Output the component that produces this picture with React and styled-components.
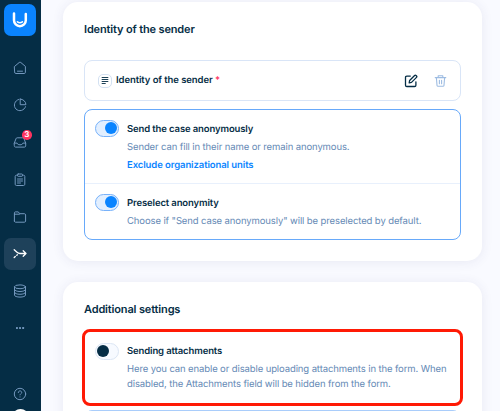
import React from 'react';
import styled, { createGlobalStyle } from 'styled-components';

const GlobalStyle = createGlobalStyle`
  * {
    box-sizing: border-box;
  }

  body {
    margin: 0;
    overflow: hidden;
    font-family: Inter, "Liberation Sans", sans-serif;
    text-rendering: geometricPrecision;
    color: #052d45;
    background: #f9faff;
  }
`;

const Page = styled.div`
  display: flex;
  width: 500px;
  height: 411px;
  overflow: hidden;
`;

const Sidebar = styled.aside`
  display: flex;
  flex-direction: column;
  align-items: center;
  flex: none;
  width: 41px;
  height: 411px;
  padding: 4px 5px 0 4px;
  background: #052d45;
`;

const Logo = styled.div`
  display: flex;
  align-items: center;
  justify-content: center;
  flex: none;
  width: 32px;
  height: 32px;
  border-radius: 7px;
  background: #0a84ff;
`;

const Menu = styled.nav`
  display: flex;
  flex-direction: column;
  flex: 1;
  gap: 5.15px;
  padding-top: 16.2px;
`;

const MenuItem = styled.a`
  position: relative;
  display: flex;
  align-items: center;
  justify-content: center;
  width: 32px;
  height: 32px;
  border-radius: 7px;
  color: ${props => (props.$active ? '#ffffff' : '#7397bd')};
  background: ${props => (props.$active ? '#1e415a' : 'transparent')};
`;

const Badge = styled.span`
  position: absolute;
  top: 4px;
  right: 4.5px;
  width: 9.5px;
  height: 9.5px;
  border-radius: 50%;
  font-size: 8px;
  font-weight: 600;
  line-height: 9.5px;
  text-align: center;
  color: #fff;
  background: #ff335f;
`;

const Help = styled.div`
  display: flex;
  flex: none;
  height: 22px;
  color: #7397bd;
`;

const Avatar = styled.div`
  flex: none;
  width: 17px;
  height: 17px;
  margin: 0 0 -15px;
  border-radius: 50%;
  background: #fff;
`;

const Main = styled.main`
  display: flex;
  flex-direction: column;
  gap: 21px;
  flex: 1;
  min-width: 0;
  padding: 2px 18px 0 22px;
`;

const Card = styled.section`
  flex: none;
  height: ${props => props.$height};
  padding: 20px 21px;
  border-radius: 15px;
  background: #fff;
  box-shadow: 0 1px 12px rgba(60, 60, 120, 0.09);
`;

const Title = styled.h2`
  margin: 0;
  height: ${props => props.$height};
  font-size: 11px;
  font-weight: 600;
  line-height: 15px;
  letter-spacing: -0.15px;
`;

const FieldRow = styled.div`
  display: flex;
  align-items: center;
  height: 41px;
  padding: 0 13px 0 12.5px;
  border: 1px solid #d9e5f7;
  border-radius: 8px;
`;

const FieldIcon = styled.span`
  display: flex;
  align-items: center;
  justify-content: center;
  width: 14px;
  height: 14px;
  margin-right: 4.5px;
  border: 1px solid #d3e1f2;
  border-radius: 5px;
`;

const FieldName = styled.span`
  flex: 1;
  padding-top: 1px;
  font-size: 9.5px;
  font-weight: 600;
  line-height: 14px;
  letter-spacing: -0.08px;
`;

const Required = styled.span`
  color: #ff335f;
`;

const Actions = styled.div`
  display: flex;
  align-items: center;
  gap: 16px;
`;

const Group = styled.div`
  height: 131px;
  margin-top: 8px;
  border: 1px solid #67a9fa;
  border-radius: 8px;
`;

const Setting = styled.div`
  display: flex;
  gap: 8px;
  height: ${props => props.$height};
  padding: 10px 10px 0;

  & + & {
    border-top: 1px solid #e8f0fc;
  }
`;

const Highlight = styled.div`
  display: flex;
  gap: 8px;
  height: 77px;
  margin: -1px -2px 0;
  padding: 11px 9px 0 10px;
  border: 3px solid #ff1a05;
  border-radius: 8px;
`;

const NextGroup = styled.div`
  height: 20px;
  margin-top: 4px;
  border: 1px solid #a9cdfb;
  border-radius: 8px;
`;

const Toggle = styled.span`
  display: flex;
  align-items: center;
  justify-content: ${props => (props.$on ? 'flex-end' : 'flex-start')};
  flex: none;
  width: 24px;
  height: 16.5px;
  padding: 0 1px;
  border: 1px solid ${props => (props.$on ? '#78b2fa' : '#dce6f4')};
  border-radius: 9px;
  background: ${props => (props.$on ? '#e2efff' : '#f7faff')};

  &::after {
    content: "";
    width: 12px;
    height: 12px;
    border-radius: 50%;
    background: ${props => (props.$on ? '#0a84ff' : '#052d45')};
  }
`;

const Texts = styled.div`
  padding-top: ${props => props.$top || '2.5px'};
  font-size: 9.5px;
  letter-spacing: -0.12px;
  white-space: nowrap;
`;

const Name = styled.div`
  font-weight: 600;
  line-height: 14px;
`;

const Description = styled.div`
  padding-top: 3.5px;
  line-height: 15px;
  letter-spacing: -0.11px;
  color: #6489b5;
`;

const TextLink = styled.a`
  display: block;
  padding-top: 4px;
  font-weight: 600;
  line-height: 14px;
  letter-spacing: -0.09px;
  color: #0a84ff;
`;

const Icon = ({ size = 14, width = 1, children }) => (
  <svg
    width={size}
    height={size}
    viewBox="0 0 14 14"
    fill="none"
    stroke="currentColor"
    strokeWidth={width}
    strokeLinecap="round"
    strokeLinejoin="round"
  >
    {children}
  </svg>
);

const HomeIcon = () => (
  <Icon>
    <path d="M1.6 5.4 6.2 1.5a1.2 1.2 0 0 1 1.6 0l4.6 3.9v5.9a1.2 1.2 0 0 1-1.2 1.2H2.8a1.2 1.2 0 0 1-1.2-1.2zM4.5 10.2h5" />
  </Icon>
);

const ChartIcon = () => (
  <Icon>
    <path d="M5.6 1.5a5.7 5.7 0 1 0 6.9 7.2M7.2 1.1v5.6h5.7a5.7 5.7 0 0 0-5.7-5.6z" />
  </Icon>
);

const InboxIcon = () => (
  <Icon>
    <path d="M1.3 8.1 3 3.7c.2-.6.6-.9 1.2-.9h5.6c.6 0 1 .3 1.2.9l1.7 4.4v2.8c0 .7-.5 1.2-1.2 1.2h-9c-.7 0-1.2-.5-1.2-1.2zM1.3 8.1h2.8c.3 1.2 1.2 1.7 2.9 1.7s2.6-.5 2.9-1.7h2.8" />
  </Icon>
);

const ClipboardIcon = () => (
  <Icon>
    <path d="M4.5 2.2H3.4c-.7 0-1.2.5-1.2 1.2v7.9c0 .7.5 1.2 1.2 1.2h7.2c.7 0 1.2-.5 1.2-1.2V3.4c0-.7-.5-1.2-1.2-1.2H9.5" />
    <rect x="4.5" y="1" width="5" height="2.3" rx=".7" />
    <path d="M4.5 6h5M4.5 8h5M4.5 10h3" />
  </Icon>
);

const FolderIcon = () => (
  <Icon>
    <path d="M1.4 11V2.9c0-.6.4-1 1-1h2.9l1.4 1.8h4.7c.7 0 1.2.5 1.2 1.2V11c0 .7-.5 1.2-1.2 1.2H2.6c-.7 0-1.2-.5-1.2-1.2zM1.4 4.2h5" />
  </Icon>
);

const MergeIcon = () => (
  <Icon width={1.3}>
    <path d="M1.2 2.7 4 5.2C5 6.2 5.5 6.5 7 6.5h6M10.2 3.8 13 6.5l-2.8 2.7M1.2 10.5l1.1-1M3.8 8.3l.6-.5" />
  </Icon>
);

const DatabaseIcon = () => (
  <Icon>
    <ellipse cx="7" cy="2.8" rx="5.5" ry="1.9" />
    <path d="M1.5 2.8v8.4c0 1 2.5 1.9 5.5 1.9s5.5-.9 5.5-1.9V2.8M1.5 5.6c0 1 2.5 1.9 5.5 1.9s5.5-.9 5.5-1.9M1.5 8.4c0 1 2.5 1.9 5.5 1.9s5.5-.9 5.5-1.9" />
  </Icon>
);

const DotsIcon = () => (
  <Icon width={0}>
    <g fill="currentColor">
      <rect x="3" y="6" width="1.9" height="1.9" rx=".5" />
      <rect x="6.1" y="6" width="1.9" height="1.9" rx=".5" />
      <rect x="9.2" y="6" width="1.9" height="1.9" rx=".5" />
    </g>
  </Icon>
);

const HelpIcon = () => (
  <Icon>
    <circle cx="7" cy="7" r="5.7" />
    <path d="M5.3 5.6c0-1 .7-1.7 1.7-1.7s1.7.7 1.7 1.6c0 1.2-1.7 1.2-1.7 2.4M7 9.9v.1" />
  </Icon>
);

const LogoIcon = () => (
  <svg width="18" height="18" viewBox="0 0 18 18" fill="none" stroke="#fff" strokeLinecap="round">
    <path d="M3 2.5v6.8a5.9 5.9 0 0 0 11.8 0V3.1" strokeWidth="2.5" />
    <path d="M6.4 10.8c1.4 1 3.6 1 5 0" strokeWidth="1.6" />
  </svg>
);

const ListIcon = () => (
  <svg width="8" height="8" viewBox="0 0 8 8" stroke="#052d45" strokeWidth=".9">
    <path d="M.7.5h6.6M.7 2.5h6.6M.7 4.5h6.6M.7 6.5h4" />
  </svg>
);

const EditIcon = () => (
  <Icon width={1.3}>
    <path d="M6.3 2.1H2.8c-.8 0-1.3.5-1.3 1.3v7.8c0 .8.5 1.3 1.3 1.3h7.8c.8 0 1.3-.5 1.3-1.3V7.8M5.2 8.8l.4-2.3 5-5c.4-.4 1-.4 1.4 0l.5.5c.4.4.4 1 0 1.4l-5 5z" />
  </Icon>
);

const TrashIcon = () => (
  <svg width="13" height="14" viewBox="0 0 13 14" fill="none" stroke="#9dbce2" strokeWidth="1.1" strokeLinecap="round" strokeLinejoin="round">
    <path d="M1.2 3.6h10.6M4.2 3.4V1.8h4.6v1.6M2.4 3.8l.6 7.5c.1.6.5 1 1.1 1h4.8c.6 0 1-.4 1.1-1l.6-7.5M5.4 6.3v3.4M7.6 6.3v3.4" />
  </svg>
);

const App = () => {
  return (
    <Page>
      <GlobalStyle />
      <Sidebar>
        <Logo><LogoIcon /></Logo>
        <Menu>
          <MenuItem><HomeIcon /></MenuItem>
          <MenuItem><ChartIcon /></MenuItem>
          <MenuItem>
            <InboxIcon />
            <Badge>3</Badge>
          </MenuItem>
          <MenuItem><ClipboardIcon /></MenuItem>
          <MenuItem><FolderIcon /></MenuItem>
          <MenuItem $active><MergeIcon /></MenuItem>
          <MenuItem><DatabaseIcon /></MenuItem>
          <MenuItem><DotsIcon /></MenuItem>
        </Menu>
        <Help><HelpIcon /></Help>
        <Avatar />
      </Sidebar>
      <Main>
        <Card $height="259px">
          <Title $height="38px">Identity of the sender</Title>
          <FieldRow>
            <FieldIcon><ListIcon /></FieldIcon>
            <FieldName>Identity of the sender <Required>*</Required></FieldName>
            <Actions>
              <EditIcon />
              <TrashIcon />
            </Actions>
          </FieldRow>
          <Group>
            <Setting $height="73px">
              <Toggle $on />
              <Texts>
                <Name>Send the case anonymously</Name>
                <Description>Sender can fill in their name or remain anonymous.</Description>
                <TextLink>Exclude organizational units</TextLink>
              </Texts>
            </Setting>
            <Setting $height="56px">
              <Toggle $on />
              <Texts>
                <Name>Preselect anonymity</Name>
                <Description>Choose if "Send case anonymously" will be preselected by default.</Description>
              </Texts>
            </Setting>
          </Group>
        </Card>
        <Card $height="160px">
          <Title $height="28px">Additional settings</Title>
          <Highlight>
            <Toggle />
            <Texts $top="1.5px">
              <Name>Sending attachments</Name>
              <Description>
                Here you can enable or disable uploading attachments in the form. When<br />
                disabled, the Attachments field will be hidden from the form.
              </Description>
            </Texts>
          </Highlight>
          <NextGroup />
        </Card>
      </Main>
    </Page>
  );
};

export default App;
